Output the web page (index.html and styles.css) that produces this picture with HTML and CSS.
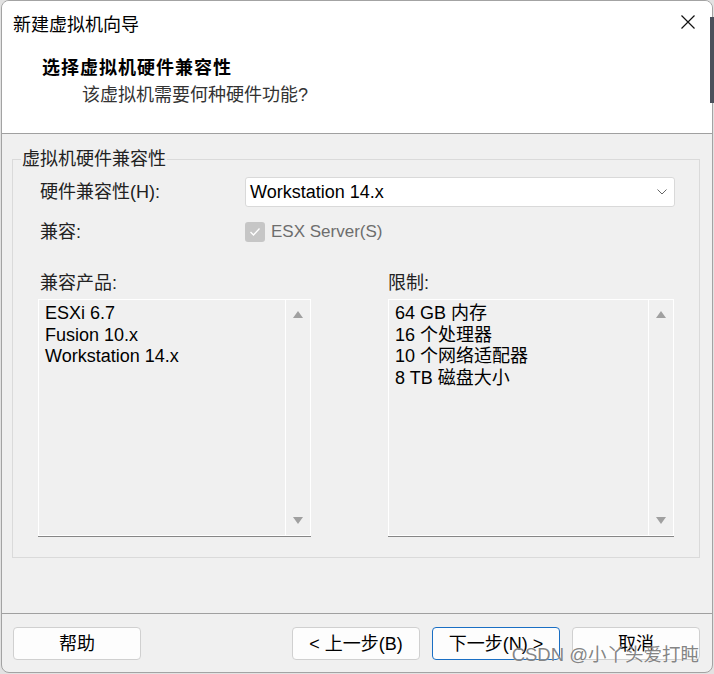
FILE: index.html
```html
<!DOCTYPE html>
<html lang="zh-CN">
<head>
<meta charset="utf-8">
<title>新建虚拟机向导</title>
<link rel="stylesheet" href="styles.css">
</head>
<body>
<div class="bgwin"></div>
<div class="dialog">
  <header class="head">
    <div class="titlebar">
      <span class="title">新建虚拟机向导</span>
      <svg class="close" width="14" height="14" viewBox="0 0 14 14"><path d="M0.5 0.5L13.5 13.5M13.5 0.5L0.5 13.5" stroke="#111" stroke-width="1.2" fill="none"/></svg>
    </div>
    <div class="heading">
      <div class="h1">选择虚拟机硬件兼容性</div>
      <div class="h2">该虚拟机需要何种硬件功能?</div>
    </div>
  </header>
  <main class="main">
    <fieldset class="group">
      <legend>虚拟机硬件兼容性</legend>
      <div class="row r1">
        <span class="lbl">硬件兼容性(H):</span>
        <div class="select">
          <span>Workstation 14.x</span>
          <svg width="10" height="6" viewBox="0 0 10 6"><polyline points="0.5,0.5 5,5 9.5,0.5" stroke="#666" stroke-width="1" fill="none"/></svg>
        </div>
      </div>
      <div class="row r2">
        <span class="lbl">兼容:</span>
        <span class="check">
          <span class="box"><svg width="12" height="10" viewBox="0 0 12 10"><polyline points="1.5,5 4.5,8 10.5,1.5" stroke="#fff" stroke-width="1.3" fill="none"/></svg></span>
          <span class="esx">ESX Server(S)</span>
        </span>
      </div>
      <div class="lists">
        <div class="col">
          <div class="cap">兼容产品:</div>
          <div class="listbox">
            <ul>
              <li>ESXi 6.7</li>
              <li>Fusion 10.x</li>
              <li>Workstation 14.x</li>
            </ul>
            <div class="sb"><i class="up"></i><i class="down"></i></div>
          </div>
        </div>
        <div class="col">
          <div class="cap cap-r">限制:</div>
          <div class="listbox">
            <ul>
              <li>64 GB 内存</li>
              <li>16 个处理器</li>
              <li>10 个网络适配器</li>
              <li>8 TB 磁盘大小</li>
            </ul>
            <div class="sb"><i class="up"></i><i class="down"></i></div>
          </div>
        </div>
      </div>
    </fieldset>
  </main>
  <footer class="foot">
    <button class="btn help">帮助</button>
    <button class="btn">&lt; 上一步(B)</button>
    <button class="btn primary">下一步(N) &gt;</button>
    <button class="btn">取消</button>
  </footer>
  <div class="watermark">CSDN @小丫头爱打盹</div>
</div>
</body>
</html>
```
FILE: styles.css
```css
* { box-sizing: border-box; }
html, body { margin: 0; }
body {
  position: relative;
  width: 714px;
  height: 674px;
  overflow: hidden;
  background: #e2e2e2;
  font-family: "Liberation Sans", "Noto Sans CJK SC", sans-serif;
  font-size: 18px;
  color: #000;
}
.bgwin {
  position: absolute;
  left: 710px;
  top: 17px;
  width: 4px;
  height: 86px;
  background: #4b505b;
  z-index: 2;
}
.dialog {
  position: relative;
  margin-left: 1px;
  width: 712px;
  height: 673px;
  border: 1px solid #a3a3a3;
  border-radius: 8px;
  background: #f0f0f0;
  display: flex;
  flex-direction: column;
  overflow: hidden;
}
.head {
  flex: none;
  height: 133px;
  background: #fff;
  border-bottom: 1px solid #a0a0a0;
}
.titlebar {
  height: 44px;
  display: flex;
  align-items: center;
  justify-content: space-between;
  padding: 0 17px 0 11px;
}
.title {
  font-family: "Noto Sans CJK SC", sans-serif;
  font-size: 18px;
  line-height: 20px;
}
.close { margin-top: -2px; }
.heading { padding: 12px 0 0 40px; }
.h1 {
  font-weight: 700;
  line-height: 22px;
  letter-spacing: 1px;
}
.h2 {
  margin: 5px 0 0 40px;
  line-height: 22px;
  color: #333;
}
.main {
  flex: 1;
  padding: 0 12px 0 10px;
}
.group {
  margin: 15px 0 0;
  padding: 0 0 21px;
  border: 1px solid #dadada;
  min-width: 0;
}
.group legend {
  margin-left: 8px;
  padding: 0 1px;
  line-height: 20px;
  color: #222;
}
.row {
  display: grid;
  grid-template-columns: 205px 1fr;
  align-items: center;
  padding: 0 24px 0 27px;
}
.lbl { color: #222; line-height: 20px; }
.r1 { margin-top: 8px; height: 30px; }
.select {
  height: 30px;
  background: #fff;
  border: 1px solid #d9d9d9;
  border-radius: 3px;
  display: flex;
  align-items: center;
  justify-content: space-between;
  padding: 0 7px 0 4px;
}
.r2 { margin-top: 15px; height: 20px; }
.check {
  display: flex;
  align-items: center;
  gap: 6px;
  color: #6d6d6d;
  line-height: 20px;
}
.esx { font-size: 17px; }
.box {
  width: 20px;
  height: 20px;
  border-radius: 3px;
  background: #c6c6c6;
  display: flex;
  align-items: center;
  justify-content: center;
}
.lists {
  display: grid;
  grid-template-columns: 273px 286px;
  column-gap: 77px;
  padding: 0 25px;
  margin-top: 31px;
}
.cap {
  line-height: 20px;
  padding-left: 2px;
  color: #222;
}
.cap-r { padding-left: 0; }
.listbox {
  margin-top: 6px;
  height: 237px;
  border: 1px solid #fff;
  box-shadow: 0 1px 0 #868686;
  display: flex;
}
.listbox ul {
  flex: 1;
  margin: 0;
  padding: 3px 0 0 6px;
  list-style: none;
  line-height: 21.5px;
}
.sb {
  width: 25px;
  border-left: 1px solid #fff;
  display: flex;
  flex-direction: column;
  justify-content: space-between;
  align-items: center;
  padding: 11px 0 11px;
}
.sb i {
  display: block;
  width: 0;
  height: 0;
  border-left: 5.5px solid transparent;
  border-right: 5.5px solid transparent;
}
.sb .up { border-bottom: 7px solid #a0a0a0; }
.sb .down { border-top: 7px solid #a0a0a0; }
.foot {
  flex: none;
  height: 59px;
  border-top: 1px solid #a0a0a0;
  display: flex;
  gap: 12px;
  padding: 13px 12px 0 11px;
}
.btn {
  width: 128px;
  height: 33px;
  padding: 0;
  background: #fdfdfd;
  border: 1px solid #d0d0d0;
  border-radius: 4px;
  font-family: "Liberation Sans", "Noto Sans CJK SC", sans-serif;
  font-size: 18px;
  line-height: 20px;
  color: #000;
}
.help { margin-right: auto; }
.primary { border-color: #1a6fc4; }
.watermark {
  position: absolute;
  right: 13px;
  bottom: 7px;
  line-height: 20px;
  font-size: 18.5px;
  color: rgba(100, 100, 100, 0.8);
  text-shadow: 0 0 1px rgba(255, 255, 255, 0.9);
  white-space: nowrap;
  pointer-events: none;
}
```
